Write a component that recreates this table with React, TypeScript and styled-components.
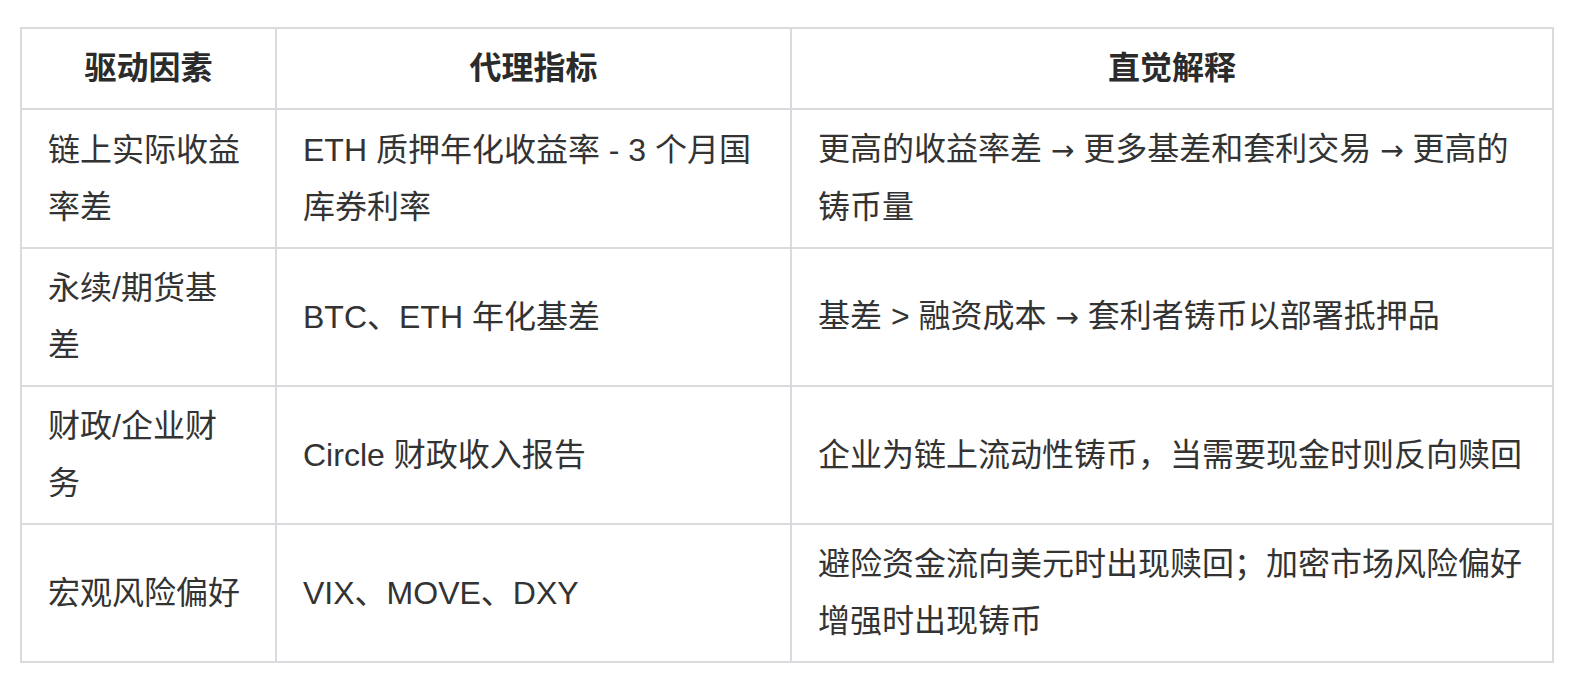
import React from 'react';
import styled, {createGlobalStyle} from 'styled-components';

const GlobalStyle = createGlobalStyle`
    html, body {
        margin: 0;
        padding: 0;
        background: #ffffff;
    }
`;

const Page = styled.div`
    padding: 27px 0 0 20px;
    font-family: "Liberation Sans", "Noto Sans CJK SC", sans-serif;
    color: #333333;
`;

const Table = styled.table`
    width: 1532px;
    table-layout: fixed;
    border-collapse: separate;
    border-spacing: 0;
    border-top: 2px solid #dadade;
    border-left: 2px solid #dadade;
    font-size: 32px;
    line-height: 57px;
`;

const HeadCell = styled.th`
    border-right: 2px solid #dadade;
    border-bottom: 2px solid #dadade;
    padding: 11px 26px;
    font-weight: bold;
    text-align: center;
    color: #2b2b2b;
`;

const Cell = styled.td<{ $narrow?: boolean }>`
    border-right: 2px solid #dadade;
    border-bottom: 2px solid #dadade;
    padding: ${props => props.$narrow ? '11px 32px 11px 26px' : '11px 26px'};
    text-align: left;
    vertical-align: middle;
    word-break: break-all;
`;

const Arrow = styled.span`
    font-family: "DejaVu Sans", sans-serif;
    font-size: 28px;
`;

const withArrows = (text: string) =>
    text.split('→').map((part, i) => (
        <React.Fragment key={i}>
            {i > 0 && <Arrow>→</Arrow>}
            {part}
        </React.Fragment>
    ));

const rows = [
    {
        driver: '链上实际收益率差',
        proxy: 'ETH 质押年化收益率 - 3 个月国库券利率',
        reading: '更高的收益率差 → 更多基差和套利交易 → 更高的铸币量',
    },
    {
        driver: '永续/期货基差',
        proxy: 'BTC、ETH 年化基差',
        reading: '基差 > 融资成本 → 套利者铸币以部署抵押品',
    },
    {
        driver: '财政/企业财务',
        proxy: 'Circle 财政收入报告',
        reading: '企业为链上流动性铸币，当需要现金时则反向赎回',
    },
    {
        driver: '宏观风险偏好',
        proxy: 'VIX、MOVE、DXY',
        reading: '避险资金流向美元时出现赎回；加密市场风险偏好增强时出现铸币',
    },
];

const App: React.FC = () => {
    return (
        <Page>
            <GlobalStyle/>
            <Table>
                <colgroup>
                    <col style={{width: 255}}/>
                    <col style={{width: 515}}/>
                    <col style={{width: 762}}/>
                </colgroup>
                <thead>
                    <tr>
                        <HeadCell>驱动因素</HeadCell>
                        <HeadCell>代理指标</HeadCell>
                        <HeadCell>直觉解释</HeadCell>
                    </tr>
                </thead>
                <tbody>
                    {rows.map(row => (
                        <tr key={row.driver}>
                            <Cell $narrow>{row.driver}</Cell>
                            <Cell>{row.proxy}</Cell>
                            <Cell>{withArrows(row.reading)}</Cell>
                        </tr>
                    ))}
                </tbody>
            </Table>
        </Page>
    );
};

export default App;
